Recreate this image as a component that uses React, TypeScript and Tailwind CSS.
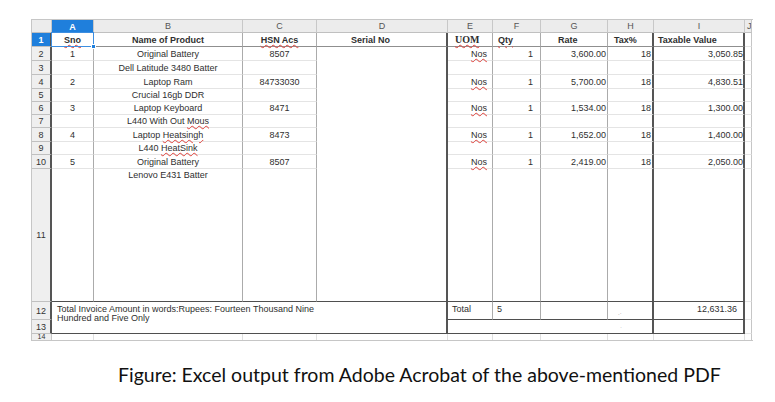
import React from 'react';

type Line = 'none' | 'light' | 'mid' | 'dark' | 'hdr' | 'frame';

const RIGHT: Record<Line, string> = {
  none: '',
  light: 'border-r border-r-[#e0e0e0]',
  mid: 'border-r border-r-[#ababab]',
  dark: 'border-r-2 border-r-[#555555]',
  hdr: 'border-r border-r-[#c8c8c8]',
  frame: 'border-r border-r-[#c6c6c6]',
};

const BOTTOM: Record<Line, string> = {
  none: '',
  light: 'border-b border-b-[#e4e4e4]',
  mid: 'border-b border-b-[#8f8f8f]',
  dark: 'border-b border-b-[#4f4f4f]',
  hdr: 'border-b border-b-[#c0c0c0]',
  frame: 'border-b border-b-[#c6c6c6]',
};

const COL_START = [
  'col-start-[1]', 'col-start-[2]', 'col-start-[3]', 'col-start-[4]', 'col-start-[5]', 'col-start-[6]',
  'col-start-[7]', 'col-start-[8]', 'col-start-[9]', 'col-start-[10]', 'col-start-[11]',
];
const ROW_START = [
  'row-start-[1]', 'row-start-[2]', 'row-start-[3]', 'row-start-[4]', 'row-start-[5]', 'row-start-[6]',
  'row-start-[7]', 'row-start-[8]', 'row-start-[9]', 'row-start-[10]', 'row-start-[11]', 'row-start-[12]',
  'row-start-[13]', 'row-start-[14]', 'row-start-[15]',
];

type CellDef = {
  r: number;
  c: number;
  cs?: string;
  right: Line;
  bottom: Line;
  cls?: string;
  children?: React.ReactNode;
};

// spell-check squiggle
const Sq = ({ children }: { children: React.ReactNode }) => (
  <span className="underline decoration-wavy decoration-[#e0403a] decoration-[0.6px] underline-offset-[1px]">{children}</span>
);

// rows 2-11 content (D is one merged cell below the header)
const items = [
  { sno: '1', name: 'Original Battery', hsn: '8507', rate: '3,600.00', value: '3,050.85' },
  { sno: '', name: 'Dell Latitude 3480 Batter' },
  { sno: '2', name: 'Laptop Ram', hsn: '84733030', rate: '5,700.00', value: '4,830.51' },
  { sno: '', name: 'Crucial 16gb DDR' },
  { sno: '3', name: 'Laptop Keyboard', hsn: '8471', rate: '1,534.00', value: '1,300.00' },
  { sno: '', name: <>L440 With Out <Sq>Mous</Sq></> },
  { sno: '4', name: <>Laptop <Sq>Heatsingh</Sq></>, hsn: '8473', rate: '1,652.00', value: '1,400.00' },
  { sno: '', name: <>L440 <Sq>HeatSink</Sq></> },
  { sno: '5', name: 'Original Battery', hsn: '8507', rate: '2,419.00', value: '2,050.00' },
  { sno: '', name: 'Lenovo E431 Batter' },
];

const buildCells = (): CellDef[] => {
  const cells: CellDef[] = [];

  // column header row
  cells.push({ r: 0, c: 0, right: 'hdr', bottom: 'hdr', cls: 'bg-[#ececec]' });
  ['A', 'B', 'C', 'D', 'E', 'F', 'G', 'H', 'I', 'J'].forEach((l, i) => {
    const sel = l === 'A';
    cells.push({
      r: 0,
      c: i + 1,
      right: i === 9 ? 'frame' : 'hdr',
      bottom: sel ? 'none' : 'hdr',
      cls: sel
        ? 'bg-[#1f7fdc] text-white font-bold justify-center items-center'
        : i === 9
          ? 'bg-[#ececec] text-[#555] items-center pl-[2px] overflow-hidden'
          : 'bg-[#ececec] text-[#555] justify-center items-center',
      children: l,
    });
  });

  // row headers
  for (let r = 1; r <= 14; r++) {
    const sel = r === 1;
    cells.push({
      r,
      c: 0,
      right: r <= 13 ? 'dark' : 'hdr',
      bottom: r === 14 ? 'none' : 'hdr',
      cls: sel
        ? 'bg-[#1f7fdc] text-white font-bold justify-center items-center'
        : r === 14
          ? 'bg-[#efefef] text-[#333] justify-center items-start overflow-hidden text-[7px] leading-[6px]'
          : 'bg-[#efefef] text-[#333] justify-center items-center',
      children: String(r),
    });
  }

  // header row 1
  const h = 'font-bold items-center';
  cells.push({
    r: 1, c: 1, right: 'mid', bottom: 'mid', cls: `${h} justify-center relative`,
    children: (
      <>
        <Sq>Sno</Sq>
        <div className="absolute -inset-px border-[1.5px] border-[#3d8ee0]" />
        <div className="absolute -bottom-[3px] -right-[3px] w-[5px] h-[5px] bg-[#1f7fdc] border border-white" />
      </>
    ),
  });
  cells.push({ r: 1, c: 2, right: 'mid', bottom: 'mid', cls: `${h} justify-center`, children: 'Name of Product' });
  cells.push({ r: 1, c: 3, right: 'mid', bottom: 'mid', cls: `${h} justify-center`, children: <Sq>HSN Acs</Sq> });
  cells.push({ r: 1, c: 4, right: 'dark', bottom: 'mid', cls: `${h} pl-[34px]`, children: 'Serial No' });
  cells.push({
    r: 1, c: 5, right: 'mid', bottom: 'mid', cls: `${h} pl-[7px] font-['Liberation_Serif',serif] text-[10px]`,
    children: <Sq>UOM</Sq>,
  });
  cells.push({ r: 1, c: 6, right: 'mid', bottom: 'mid', cls: `${h} pl-[5px]`, children: <Sq>Qty</Sq> });
  cells.push({ r: 1, c: 7, right: 'mid', bottom: 'mid', cls: `${h} pl-[17px]`, children: 'Rate' });
  cells.push({ r: 1, c: 8, right: 'dark', bottom: 'mid', cls: `${h} pl-[6px]`, children: 'Tax%' });
  cells.push({ r: 1, c: 9, right: 'dark', bottom: 'mid', cls: `${h} pl-[4px]`, children: 'Taxable Value' });
  cells.push({ r: 1, c: 10, right: 'frame', bottom: 'light' });

  // item rows 2-11
  items.forEach((it, i) => {
    const r = i + 2;
    const last = r === 11;
    const b: Line = last ? 'dark' : 'light';
    const v = last ? 'items-start pt-[1px]' : 'items-center';
    const has = it.sno !== '';
    cells.push({ r, c: 1, right: 'mid', bottom: b, cls: `${v} justify-center`, children: it.sno });
    cells.push({ r, c: 2, right: 'mid', bottom: b, cls: `${v} justify-center whitespace-pre`, children: it.name });
    cells.push({ r, c: 3, right: 'mid', bottom: b, cls: `${v} justify-center`, children: it.hsn });
    cells.push({ r, c: 5, right: 'mid', bottom: b, cls: `${v} justify-end pr-[5px]`, children: has ? <Sq>Nos</Sq> : null });
    cells.push({ r, c: 6, right: 'mid', bottom: b, cls: `${v} justify-end pr-[7px]`, children: has ? '1' : null });
    cells.push({ r, c: 7, right: 'mid', bottom: b, cls: `${v} justify-end pr-[1px]`, children: it.rate });
    cells.push({ r, c: 8, right: 'dark', bottom: b, cls: `${v} justify-end pr-[1px]`, children: has ? '18' : null });
    cells.push({ r, c: 9, right: 'dark', bottom: b, cls: `${v} justify-end pr-0`, children: it.value });
    cells.push({ r, c: 10, right: 'frame', bottom: 'light' });
  });
  // Serial No column merged D2:D11
  cells.push({ r: 2, c: 4, cs: 'row-span-10', right: 'dark', bottom: 'dark' });

  // totals rows 12-13
  cells.push({
    r: 12, c: 1, cs: 'col-span-4 row-span-2', right: 'dark', bottom: 'dark',
    cls: 'items-start pl-[5px] pt-[3px] leading-[9px]',
    children: (
      <>
        Total Invoice Amount in words:Rupees: Fourteen Thousand Nine
        <br />
        Hundred and Five Only
      </>
    ),
  });
  cells.push({ r: 12, c: 5, right: 'mid', bottom: 'dark', cls: 'items-start pt-[2px] pl-[4px]', children: 'Total' });
  cells.push({ r: 12, c: 6, right: 'mid', bottom: 'dark', cls: 'items-start pt-[2px] pl-[4px]', children: '5' });
  cells.push({ r: 12, c: 7, right: 'mid', bottom: 'dark' });
  cells.push({
    r: 12, c: 8, right: 'dark', bottom: 'dark', cls: 'items-end pb-[3px] pl-[10px] text-[6px] leading-[6px] text-[#888]',
    children: '.·',
  });
  cells.push({ r: 12, c: 9, right: 'dark', bottom: 'dark', cls: 'items-start pt-[2px] justify-end pr-[6px]', children: '12,631.36' });
  cells.push({ r: 12, c: 10, right: 'frame', bottom: 'light' });
  cells.push({
    r: 13, c: 5, cs: 'col-span-4', right: 'dark', bottom: 'dark',
    cls: 'items-center justify-end pr-[30px] text-[6px] leading-[6px] text-[#999]',
    children: '·',
  });
  cells.push({ r: 13, c: 9, right: 'dark', bottom: 'dark' });
  cells.push({ r: 13, c: 10, right: 'frame', bottom: 'light' });

  // row 14, cut off by the window
  for (let c = 1; c <= 10; c++) {
    cells.push({ r: 14, c, right: c === 10 ? 'frame' : 'light', bottom: 'none' });
  }

  return cells;
};

const Sheet = () => (
  <div className="grid grid-cols-[20px_42px_149px_74px_131px_45px_48px_67px_46px_91px_7px] grid-rows-[13px_14px_14px_14px_14px_13px_13px_13px_14px_13px_14px_133px_18px_14px_6px] border-l border-t border-b border-[#c6c6c6] w-[722px] bg-white font-['Liberation_Sans',Arial,sans-serif] text-[9px] leading-[10px] text-[#2f2f2f]">
    {buildCells().map((cell, i) => (
      <div
        key={i}
        className={`flex min-w-0 ${COL_START[cell.c]} ${ROW_START[cell.r]} ${cell.cs ?? ''} ${RIGHT[cell.right]} ${BOTTOM[cell.bottom]} ${cell.cls ?? ''}`}
      >
        {cell.children !== undefined && cell.children !== null ? <span className="whitespace-pre">{cell.children}</span> : null}
      </div>
    ))}
  </div>
);

export default function App() {
  return (
    <div className="w-[775px] h-[402px] bg-white overflow-hidden">
      <div className="pt-[19px] pl-[31px]">
        <Sheet />
      </div>
      <div className="pt-[22px] pl-[118px] font-['Lato',sans-serif] text-[19.5px] leading-[24px] text-[#111]">
        Figure: Excel output from Adobe Acrobat of the above-mentioned PDF
      </div>
    </div>
  );
}
